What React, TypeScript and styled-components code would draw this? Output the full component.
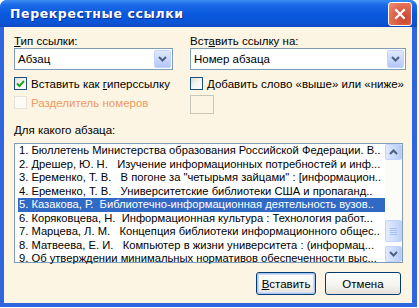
import React from 'react';
import styled, { createGlobalStyle } from 'styled-components';

const GlobalStyle = createGlobalStyle`
  html, body {
    margin: 0;
    padding: 0;
    background: #ffffff;
  }
  body {
    font-family: Tahoma, "Liberation Sans", "DejaVu Sans", sans-serif;
  }
`;

const Window = styled.div`
  width: 417px;
  height: 307px;
  display: flex;
  flex-direction: column;
  background: #2f66e0;
  border-radius: 7px 7px 0 0;
  overflow: hidden;
`;

const TitleBar = styled.div`
  height: 27px;
  flex: none;
  display: flex;
  align-items: center;
  justify-content: space-between;
  padding: 0 5px 0 10px;
  background: linear-gradient(180deg, #3c8cf4 0%, #1a6ae8 18%, #0a58dd 55%, #0b55d6 85%, #1046c6 100%);
`;

const Title = styled.span`
  color: #ffffff;
  font-family: "DejaVu Sans", sans-serif;
  font-weight: bold;
  font-size: 12.5px;
  letter-spacing: 0.6px;
  text-shadow: 1px 1px 0 #0a2a90;
`;

const CloseButton = styled.div`
  width: 22px;
  height: 22px;
  border-radius: 3px;
  border: 1px solid #ffffff;
  background: radial-gradient(circle at 70% 70%, #c8452d 0%, #e26b50 60%, #f0927a 100%);
  display: flex;
  align-items: center;
  justify-content: center;
`;

const Body = styled.div`
  flex: 1;
  min-height: 0;
  margin: 0 5px 4px 4px;
  background: #fcf5e3;
  padding: 0 9px 0 10px;
  display: flex;
  flex-direction: column;
  font-size: 11.5px;
  color: #000000;
`;

const TopGrid = styled.div`
  display: grid;
  grid-template-columns: 159px 216px;
  column-gap: 17px;
  margin-top: 7px;
`;

const Column = styled.div`
  display: flex;
  flex-direction: column;
`;

const Label = styled.div`
  height: 14px;
  line-height: 14px;
  white-space: nowrap;
`;

const Combo = styled.div`
  height: 20px;
  border: 1px solid #7f9db9;
  background: #ffffff;
  display: flex;
  align-items: center;
  justify-content: space-between;
  padding: 0 1px 0 3px;
`;

const DropButton = styled.div`
  width: 15px;
  height: 16px;
  border: 1px solid #c3d3fd;
  border-radius: 2px;
  background: linear-gradient(180deg, #dfe8fe 0%, #c5d5fb 60%, #b3c7f5 100%);
  display: flex;
  align-items: center;
  justify-content: center;
`;

const CheckRow = styled.div<{ disabled?: boolean; gapTop: number }>`
  display: flex;
  align-items: center;
  gap: 4px;
  margin-top: ${p => p.gapTop}px;
  height: 13px;
  white-space: nowrap;
  color: ${p => (p.disabled ? '#ef9a62' : '#000000')};
`;

const CheckBox = styled.div<{ disabled?: boolean }>`
  width: 11px;
  height: 11px;
  flex: none;
  border: 1px solid ${p => (p.disabled ? '#e6e2d6' : '#1c5180')};
  background: ${p => (p.disabled ? '#fdfbf6' : 'linear-gradient(135deg, #dcdcd6 0%, #f5f5f2 50%, #ffffff 100%)')};
  display: flex;
  align-items: center;
  justify-content: center;
`;

const SmallBox = styled.div`
  width: 22px;
  height: 17px;
  margin-top: 5px;
  border: 1px solid #c9c7ba;
  background: #fcf5e3;
`;

const ListLabel = styled(Label)`
  margin-top: 9px;
  margin-bottom: 6px;
`;

const ListBox = styled.div`
  height: 118px;
  flex: none;
  border: 1px solid #7f9db9;
  background: #ffffff;
  display: flex;
`;

const Items = styled.div`
  flex: 1;
  min-width: 0;
  padding: 0 0 0 3px;
  font-size: 11.2px;
`;

const Item = styled.div<{ selected?: boolean }>`
  height: 13.5px;
  line-height: 13.5px;
  padding-left: 1px;
  white-space: pre;
  overflow: hidden;
  background: ${p => (p.selected ? '#316ac5' : 'transparent')};
  color: ${p => (p.selected ? '#ffffff' : '#000000')};
`;

const ScrollBar = styled.div`
  width: 17px;
  flex: none;
  background: #fbfbf8;
  display: flex;
  flex-direction: column;
`;

const ScrollButton = styled.div`
  height: 14px;
  border: 1px solid #c3d3fd;
  border-radius: 2px;
  background: linear-gradient(90deg, #dfe8fe 0%, #c8d7fb 60%, #b7cbf6 100%);
  display: flex;
  align-items: center;
  justify-content: center;
`;

const Track = styled.div`
  flex: 1;
  display: flex;
  flex-direction: column;
  justify-content: flex-end;
  padding-bottom: 4px;
`;

const Thumb = styled.div`
  height: 20px;
  border: 1px solid #c3d3fd;
  border-radius: 2px;
  background: linear-gradient(90deg, #e4ecfe 0%, #cedcfc 60%, #bdd0f7 100%);
  display: flex;
  align-items: center;
  justify-content: center;
`;

const ButtonRow = styled.div`
  display: flex;
  justify-content: flex-end;
  gap: 9px;
  margin-top: 9px;
  padding-right: 2px;
`;

const Button = styled.div<{ primary?: boolean; w: number }>`
  width: ${p => p.w}px;
  height: 21px;
  border: 1px solid #003c74;
  border-radius: 3px;
  background: linear-gradient(180deg, #ffffff 0%, #f4f3ee 60%, #e3e1d8 100%);
  box-shadow: ${p => (p.primary ? 'inset 0 0 0 1px #aac4f4, inset 0 0 0 2px #cddbf8' : 'none')};
  display: flex;
  align-items: center;
  justify-content: center;
`;

const Mn = styled.span`
  text-decoration: underline;
`;

const Chevron = ({ up }: { up?: boolean }) => (
  <svg width="9" height="6" viewBox="0 0 9 6">
    <path
      d={up ? 'M1 5 L4.5 1.5 L8 5' : 'M1 1 L4.5 4.5 L8 1'}
      fill="none"
      stroke="#4d6185"
      strokeWidth="2"
    />
  </svg>
);

const items = [
  '1. Бюллетень Министерства образования Российской Федерации. В..',
  '2. Дрешер, Ю. Н.   Изучение информационных потребностей и инф...',
  '3. Еременко, Т. В.   В погоне за "четырьмя зайцами" : [информацион..',
  '4. Еременко, Т. В.   Университетские библиотеки США и пропаганд..',
  '5. Казакова, Р.  Библиотечно-информационная деятельность вузов..',
  '6. Коряковцева, Н.  Информационная культура : Технология работ...',
  '7. Марцева, Л. М.   Концепция библиотеки информационного общес..',
  '8. Матвеева, Е. И.   Компьютер в жизни университета : (информац...',
  '9. Об утверждении минимальных нормативов обеспеченности выс...',
];

export default function App() {
  return (
    <>
      <GlobalStyle />
      <Window>
        <TitleBar>
          <Title>Перекрестные ссылки</Title>
          <CloseButton>
            <svg width="12" height="12" viewBox="0 0 12 12">
              <path d="M2 2 L10 10 M10 2 L2 10" stroke="#ffffff" strokeWidth="2.2" strokeLinecap="square" />
            </svg>
          </CloseButton>
        </TitleBar>
        <Body>
          <TopGrid>
            <Column>
              <Label><Mn>Т</Mn>ип ссылки:</Label>
              <Combo>
                <span>Абзац</span>
                <DropButton><Chevron /></DropButton>
              </Combo>
              <CheckRow gapTop={7}>
                <CheckBox>
                  <svg width="9" height="9" viewBox="0 0 9 9">
                    <path d="M1 4.5 L3.5 7 L8 1.8" fill="none" stroke="#21a121" strokeWidth="2" />
                  </svg>
                </CheckBox>
                <span>Вставить как <Mn>г</Mn>иперссылку</span>
              </CheckRow>
              <CheckRow disabled gapTop={6}>
                <CheckBox disabled />
                <span>Разделитель номеров</span>
              </CheckRow>
            </Column>
            <Column>
              <Label>Вст<Mn>а</Mn>вить ссылку на:</Label>
              <Combo>
                <span>Номер абзаца</span>
                <DropButton><Chevron /></DropButton>
              </Combo>
              <CheckRow gapTop={7}>
                <CheckBox />
                <span><Mn>Д</Mn>обавить слово «выше» или «ниже»</span>
              </CheckRow>
              <SmallBox />
            </Column>
          </TopGrid>
          <ListLabel><Mn>Д</Mn>ля какого абзаца:</ListLabel>
          <ListBox>
            <Items>
              {items.map((t, i) => (
                <Item key={i} selected={i === 4}>{t}</Item>
              ))}
            </Items>
            <ScrollBar>
              <ScrollButton><Chevron up /></ScrollButton>
              <Track>
                <Thumb>
                  <svg width="7" height="8" viewBox="0 0 7 8">
                    <path d="M0 1.5 H7 M0 3.5 H7 M0 5.5 H7 M0 7.5 H7" stroke="#a9c0f2" strokeWidth="1" />
                  </svg>
                </Thumb>
              </Track>
              <ScrollButton><Chevron /></ScrollButton>
            </ScrollBar>
          </ListBox>
          <ButtonRow>
            <Button primary w={58}><span><Mn>В</Mn>ставить</span></Button>
            <Button w={74}>Отмена</Button>
          </ButtonRow>
        </Body>
      </Window>
    </>
  );
}
